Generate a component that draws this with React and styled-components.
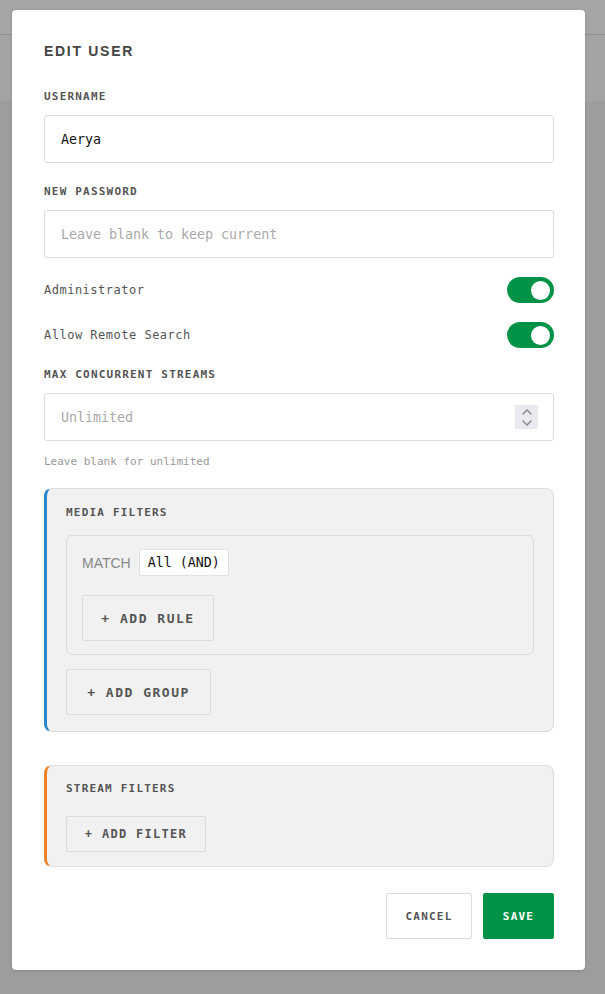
import styled, { createGlobalStyle } from "styled-components";

const GlobalStyle = createGlobalStyle`
  html, body {
    margin: 0;
    padding: 0;
  }
  body {
    font-family: "DejaVu Sans Mono", "Liberation Mono", monospace;
    background: #9e9e9e;
  }
  * {
    box-sizing: border-box;
  }
`;

const mono = `"DejaVu Sans Mono", "Liberation Mono", monospace`;

const Page = styled.div`
  height: 994px;
  background: #9d9d9d;
  position: relative;
  overflow: hidden;
`;
const TopBar = styled.div`
  height: 35px;
  background: #a5a5a5;
  border-bottom: 1px solid #8f8f8f;
`;
const SubBar = styled.div`
  height: 66px;
  background: #a3a3a3;
`;

const Overlay = styled.div`
  position: absolute;
  inset: 0;
  padding: 10px 20px 0 12px;
`;

const Modal = styled.div`
  width: 573px;
  background: #fff;
  border-radius: 4px;
  box-shadow: 0 1px 3px rgba(0, 0, 0, 0.15);
  padding: 33px 31px 31px 32px;
  display: flex;
  flex-direction: column;
`;

const Title = styled.h2`
  margin: 0 0 31px;
  font-family: "Liberation Sans", Arial, sans-serif;
  font-size: 14px;
  line-height: 16px;
  font-weight: 700;
  letter-spacing: 1.7px;
  color: #444;
`;

const Field = styled.div`
  display: flex;
  flex-direction: column;
  margin-bottom: ${(p) => p.$mb ?? 20}px;
`;

const Label = styled.label`
  font-family: ${mono};
  font-size: 11px;
  line-height: 14px;
  font-weight: 700;
  letter-spacing: 1.2px;
  color: #555;
  margin-bottom: 11px;
`;

const InputWrap = styled.div`
  position: relative;
  height: 48px;
`;

const Input = styled.input`
  width: 100%;
  height: 100%;
  border: 1px solid #dcdcdc;
  border-radius: 3px;
  padding: 0 16px;
  font-family: ${mono};
  font-size: 13.3px;
  color: #111;
  outline: none;
  background: #fff;
  &::placeholder {
    color: #aaa;
  }
`;

const Spinner = styled.div`
  position: absolute;
  right: 16px;
  top: 12px;
  width: 23px;
  height: 24px;
  background: #e9e9ef;
  display: flex;
  flex-direction: column;
  align-items: center;
  justify-content: center;
  gap: 5px;
`;

const ToggleRow = styled.div`
  display: flex;
  align-items: center;
  justify-content: space-between;
  height: 26px;
  margin-bottom: ${(p) => p.$mb}px;
`;

const ToggleText = styled.span`
  font-family: ${mono};
  font-size: 12px;
  letter-spacing: 0.5px;
  color: #555;
`;

const Switch = styled.div`
  width: 47px;
  height: 26px;
  border-radius: 13px;
  background: ${(p) => (p.$on ? "#009247" : "#ccc")};
  display: flex;
  align-items: center;
  justify-content: ${(p) => (p.$on ? "flex-end" : "flex-start")};
  padding: 0 4px;
`;

const Knob = styled.div`
  width: 19px;
  height: 19px;
  border-radius: 50%;
  background: #fff;
`;

const Hint = styled.div`
  font-family: ${mono};
  font-size: 11px;
  line-height: 14px;
  color: #999;
  margin-top: 14px;
`;

const FilterBox = styled.div`
  background: #f1f1f1;
  border: 1px solid #dcdcdc;
  border-left: 3px solid ${(p) => p.$accent};
  border-radius: 8px;
  padding: ${(p) => p.$pad};
  display: flex;
  flex-direction: column;
  align-items: flex-start;
  margin-bottom: ${(p) => p.$mb}px;
`;

const BoxTitle = styled.div`
  font-family: ${mono};
  font-size: 11px;
  line-height: 14px;
  font-weight: 700;
  letter-spacing: 1.2px;
  color: #555;
  margin-bottom: ${(p) => p.$mb}px;
`;

const Group = styled.div`
  align-self: stretch;
  border: 1px solid #dcdcdc;
  border-radius: 6px;
  padding: 13px 15px 13px 15px;
  display: flex;
  flex-direction: column;
  align-items: flex-start;
  gap: 19px;
  margin-bottom: 14px;
`;

const MatchRow = styled.div`
  display: flex;
  align-items: center;
  gap: 8px;
`;

const MatchText = styled.span`
  font-family: "Liberation Sans", Arial, sans-serif;
  font-size: 14px;
  color: #888;
`;

const Select = styled.div`
  height: 27px;
  padding: 0 8px;
  display: flex;
  align-items: center;
  background: #fff;
  border: 1px solid #e2e2e2;
  border-radius: 2px;
  font-family: ${mono};
  font-size: 13.3px;
  color: #111;
`;

const AddButton = styled.button`
  height: ${(p) => p.$h}px;
  width: ${(p) => p.$w}px;
  background: #f1f1f1;
  border: 1px solid #dcdcdc;
  border-radius: 2px;
  font-family: ${mono};
  font-size: ${(p) => p.$fs}px;
  font-weight: 700;
  letter-spacing: ${(p) => p.$ls}px;
  color: #555;
  padding: 0;
  display: flex;
  align-items: center;
  justify-content: center;
  cursor: pointer;
`;

const Footer = styled.div`
  display: flex;
  justify-content: flex-end;
  gap: 11px;
`;

const ActionButton = styled.button`
  height: 46px;
  width: ${(p) => p.$w}px;
  border-radius: 2px;
  border: 1px solid ${(p) => (p.$primary ? "#009247" : "#dcdcdc")};
  background: ${(p) => (p.$primary ? "#009247" : "#fff")};
  color: ${(p) => (p.$primary ? "#fff" : "#555")};
  font-family: ${mono};
  font-size: 11px;
  font-weight: 700;
  letter-spacing: 1.2px;
  padding: 0;
  cursor: pointer;
`;

const Chevron = ({ up }) => (
  <svg width="10" height="6" viewBox="0 0 10 6" fill="none">
    <path
      d={up ? "M1 5 L5 1 L9 5" : "M1 1 L5 5 L9 1"}
      stroke="#888"
      strokeWidth="1.4"
      strokeLinecap="round"
      strokeLinejoin="round"
    />
  </svg>
);

const Toggle = ({ label, mb }) => (
  <ToggleRow $mb={mb}>
    <ToggleText>{label}</ToggleText>
    <Switch $on>
      <Knob />
    </Switch>
  </ToggleRow>
);

export default function App() {
  return (
    <>
      <GlobalStyle />
      <Page>
        <TopBar />
        <SubBar />
        <Overlay>
          <Modal>
            <Title>EDIT USER</Title>

            <Field $mb={22}>
              <Label>USERNAME</Label>
              <InputWrap>
                <Input defaultValue="Aerya" />
              </InputWrap>
            </Field>

            <Field $mb={19}>
              <Label>NEW PASSWORD</Label>
              <InputWrap>
                <Input placeholder="Leave blank to keep current" />
              </InputWrap>
            </Field>

            <Toggle label="Administrator" mb={19} />
            <Toggle label="Allow Remote Search" mb={20} />

            <Field $mb={19}>
              <Label>MAX CONCURRENT STREAMS</Label>
              <InputWrap>
                <Input placeholder="Unlimited" />
                <Spinner>
                  <Chevron up />
                  <Chevron />
                </Spinner>
              </InputWrap>
              <Hint>Leave blank for unlimited</Hint>
            </Field>

            <FilterBox $accent="#2a86c8" $pad="17px 19px 16px 19px" $mb={33}>
              <BoxTitle $mb={15}>MEDIA FILTERS</BoxTitle>
              <Group>
                <MatchRow>
                  <MatchText>MATCH</MatchText>
                  <Select>All (AND)</Select>
                </MatchRow>
                <AddButton $h={46} $w={132} $fs={13} $ls={1.5}>
                  + ADD RULE
                </AddButton>
              </Group>
              <AddButton $h={46} $w={145} $fs={13} $ls={1.5}>
                + ADD GROUP
              </AddButton>
            </FilterBox>

            <FilterBox $accent="#ee8327" $pad="16px 19px 14px 19px" $mb={26}>
              <BoxTitle $mb={20}>STREAM FILTERS</BoxTitle>
              <AddButton $h={36} $w={140} $fs={12} $ls={1.3}>
                + ADD FILTER
              </AddButton>
            </FilterBox>

            <Footer>
              <ActionButton $w={86}>CANCEL</ActionButton>
              <ActionButton $w={71} $primary>
                SAVE
              </ActionButton>
            </Footer>
          </Modal>
        </Overlay>
      </Page>
    </>
  );
}
